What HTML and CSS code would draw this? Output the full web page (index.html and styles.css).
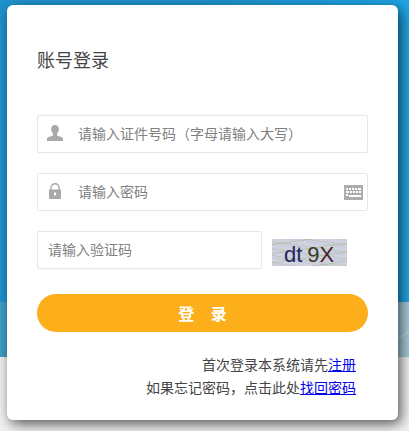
FILE: index.html
```html
<!DOCTYPE html>
<html lang="zh-CN">

<head>
    <meta charset="UTF-8">
    <meta name="viewport" content="width=device-width, initial-scale=1.0">
    <title>账号登录</title>
    <link rel="stylesheet" href="styles.css">
</head>

<body>

    <div class="login-box">
        <h2>账号登录</h2>

        <div class="field">
            <svg class="field-icon" width="16" height="16" viewBox="0 0 16 17" preserveAspectRatio="none">
                <path fill="#a9a9a9" d="M8 0c2.600 0 3.900 1.900 3.900 4.200 0 1.900-.8 3.600-1.900 4.700v1.600c0 .8 1.200 1.100 3 1.800 1.900.7 3 1.400 3 2.300V17H0v-2.400c0-.9 1.100-1.600 3-2.300 1.800-.7 3-1 3-1.800V8.900C4.900 7.800 4.100 6.100 4.100 4.200 4.100 1.900 5.400 0 8 0z" />
            </svg>
            <input type="text" placeholder="请输入证件号码（字母请输入大写）">
        </div>

        <div class="field">
            <svg class="field-icon lock" width="12" height="16" viewBox="0 0 12 16">
                <path fill="none" stroke="#a9a9a9" stroke-width="1.400" d="M2 8V4.800C2 2.400 3.600.8 6 .8s4 1.600 4 4V8" />
                <path fill="#a9a9a9" fill-rule="evenodd" d="M1 6.500h10c.6 0 1 .4 1 1V15c0 .6-.4 1-1 1H1c-.6 0-1-.4-1-1V7.500c0-.6.4-1 1-1zM5 9.500v3h2v-3z" />
            </svg>
            <input type="password" placeholder="请输入密码">
            <svg class="keyboard" width="19" height="15" viewBox="0 0 19 15">
                <rect width="19" height="15" fill="#acacac" />
                <path fill="#fff" d="M2 3h2v2H2zM5 3h2v2H5zM8 3h2v2H8zM11 3h2v2h-2zM14 3h3v2h-3zM2 6h3v2H2zM6 6h2v2H6zM9 6h2v2H9zM12 6h2v2h-2zM15 6h2v2h-2zM2 9h2v2H2zM5 10h12v2H5z" />
            </svg>
        </div>

        <div class="captcha-row">
            <input class="captcha-input" type="text" placeholder="请输入验证码">
            <div class="captcha-img"><span class="c1">dt</span> <span class="c2">9</span><span class="c3">X</span></div>
        </div>

        <button class="login-btn">登 录</button>

        <div class="tips">
            <p>首次登录本系统请先<a href="#">注册</a></p>
            <p>如果忘记密码，点击此处<a href="#">找回密码</a></p>
        </div>
    </div>

</body>

</html>
```

FILE: styles.css
```css
* {
    box-sizing: border-box;
    margin: 0;
    padding: 0;
    font-family: "Noto Sans CJK SC", "Liberation Sans", sans-serif;
}

body {
    height: 431px;
    overflow: hidden;
    padding: 5px 11px 0 7px;
    background:
        linear-gradient(145deg, transparent 0 60%, rgba(255, 255, 255, 0.35) 60% 62%, transparent 62%) right 300px / 12px 57px no-repeat,
        linear-gradient(90deg, #3d9fc8 0, #3d9fc8 50%, #a7ccdb 98%) 0 302px / 100% 55px no-repeat,
        linear-gradient(90deg, #1f92cf 0, #1f92cf 50%, #1ea6e6 100%) top / 100% 357px no-repeat,
        #f2f2f2;
}

.login-box {
    height: 415px;
    padding: 40px 30px 0;
    background-color: #fff;
    border-radius: 6px;
    box-shadow: 3px 4px 13px rgba(0, 0, 0, 0.65);
}

.login-box h2 {
    height: 70px;
    font-size: 18px;
    font-weight: 400;
    line-height: 28px;
    color: #444;
}

/* Input rows */
.field {
    position: relative;
    height: 38px;
    margin-bottom: 20px;
}

.field input,
.captcha-input {
    display: block;
    height: 38px;
    padding-bottom: 2px;
    border: 1px solid #e6e6e6;
    border-radius: 2px;
    font-size: 14px;
    color: #333;
    outline: none;
}

.field input {
    width: 100%;
    padding-left: 40px;
}

input::placeholder {
    color: #808080;
    opacity: 1;
}

.field-icon {
    position: absolute;
    left: 10px;
    top: 10px;
}

.field-icon.lock {
    left: 12px;
}

.field .keyboard {
    position: absolute;
    right: 5px;
    top: 12px;
}

/* Captcha */
.captcha-row {
    display: flex;
    align-items: center;
    gap: 10px;
}

.captcha-input {
    width: 225px;
    padding-left: 10px;
}

.captcha-img {
    width: 75px;
    height: 27px;
    margin-top: 5px;
    padding-left: 12px;
    font-size: 22px;
    line-height: 26px;
    white-space: nowrap;
    background:
        repeating-linear-gradient(172deg, transparent 0 5px, rgba(170, 190, 150, 0.6) 5px 6px, transparent 6px 9px),
        repeating-linear-gradient(8deg, #cacddb 0 3px, #c3c9c4 3px 4px, #d0d2e0 4px 7px);
}

.captcha-img span {
    font-family: "Liberation Sans", sans-serif;
}

.c1 {
    color: #2a2560;
}

.c2 {
    color: #3a3a2a;
}

.c3 {
    color: #4a1f2a;
}

.login-btn {
    display: block;
    width: 331px;
    height: 38px;
    margin-top: 25px;
    border: none;
    border-radius: 19px;
    background-color: #fdae1b;
    color: #fff;
    font-size: 16px;
    font-weight: 700;
    word-spacing: 13px;
    cursor: pointer;
}

/* Bottom links */
.tips {
    margin-top: 21px;
    padding-right: 12px;
    text-align: right;
    font-size: 14px;
    line-height: 23px;
    color: #444;
}

.tips a {
    color: #0000ee;
}
```
